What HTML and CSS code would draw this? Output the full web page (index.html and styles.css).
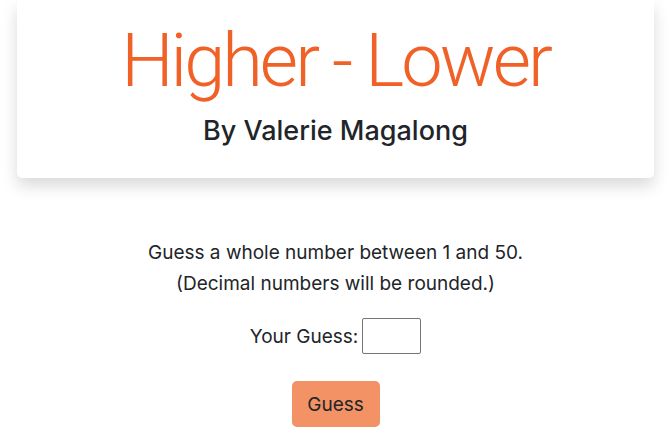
FILE: index.html
```html
<!DOCTYPE html>
<html>
<head>
<meta charset="utf-8">
<link rel="stylesheet" href="styles.css">
</head>
<body>
<header class="card">
  <h1 class="title">Higher - Lower</h1>
  <h2 class="subtitle">By Valerie Magalong</h2>
</header>
<main class="game">
  <p class="intro">Guess a whole number between 1 and 50.<br>(Decimal numbers will be rounded.)</p>
  <div class="row">
    <label class="label" for="guess">Your Guess:</label>
    <input class="input" id="guess" type="text">
  </div>
  <button class="btn">Guess</button>
</main>
</body>
</html>
```
FILE: styles.css
```css
html, body {
  margin: 0;
  padding: 0;
  background: #fff;
}
body {
  font-family: Inter, "Noto Sans", sans-serif;
  color: #212529;
}
.card {
  margin: 0 17px;
  padding: 16px 0 30px;
  background: #fff;
  border-radius: 0 0 5px 5px;
  box-shadow: 0 8px 16px rgba(0, 0, 0, 0.15);
  text-align: center;
}
.title {
  margin: 0;
  font-family: Roboto, Inter, sans-serif;
  font-size: 74px;
  font-weight: 300;
  line-height: 90px;
  letter-spacing: -3px;
  color: #f06128;
}
.subtitle {
  margin: 8px 0 0;
  font-size: 27px;
  font-weight: 500;
  line-height: 34px;
  color: #212529;
}
.game {
  display: flex;
  flex-direction: column;
  align-items: center;
  padding-top: 59px;
}
.intro {
  margin: 0;
  font-size: 19px;
  line-height: 31px;
  text-align: center;
}
.row {
  display: flex;
  align-items: center;
  gap: 4px;
  margin-top: 19px;
}
.label {
  font-size: 19px;
}
.input {
  width: 59px;
  height: 36px;
  box-sizing: border-box;
  border: 1px solid #767676;
  border-radius: 2px;
  padding: 0 4px;
  font-size: 18px;
}
.btn {
  margin-top: 27px;
  width: 88px;
  height: 46px;
  border: none;
  border-radius: 5px;
  background: #f39264;
  color: #212529;
  font-family: inherit;
  font-size: 19px;
}
```
